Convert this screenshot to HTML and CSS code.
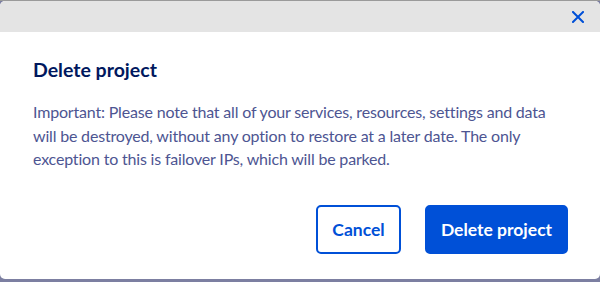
FILE: index.html
```html
<!DOCTYPE html>
<html lang="en">
<head>
<meta charset="utf-8">
<title>Delete project</title>
<link rel="stylesheet" href="styles.css">
</head>
<body>
<div class="backdrop">
  <div class="modal" role="dialog" aria-labelledby="modal-title">
    <div class="modal-header">
      <button class="close" aria-label="Close">
        <svg width="12" height="12" viewBox="0 0 12 12" aria-hidden="true">
          <path d="M1 1 L11 11 M11 1 L1 11" stroke="#0050d7" stroke-width="2" stroke-linecap="square" fill="none"/>
        </svg>
      </button>
    </div>
    <div class="modal-body">
      <h2 id="modal-title" class="title">Delete project</h2>
      <p class="text">Important: Please note that all of your services, resources, settings and data will be destroyed, without any option to restore at a later date. The only exception to this is failover IPs, which will be parked.</p>
    </div>
    <div class="modal-footer">
      <button class="btn btn-secondary">Cancel</button>
      <button class="btn btn-primary">Delete project</button>
    </div>
  </div>
</div>
</body>
</html>
```
FILE: styles.css
```css
html, body {
  margin: 0;
  padding: 0;
  height: 100%;
}
body {
  background: linear-gradient(#9a9a9a 0, #9a9a9a 1px, #7c7fa1 1px);
  font-family: Lato, "Liberation Sans", sans-serif;
  overflow: hidden;
}
.backdrop {
  padding-top: 1px;
  height: 100%;
  box-sizing: border-box;
}
.modal {
  background: #fff;
  height: 278px;
  border-radius: 5px;
  overflow: hidden;
  display: flex;
  flex-direction: column;
}
.modal-header {
  height: 31px;
  background: #e4e4e4;
  display: flex;
  justify-content: flex-end;
  align-items: center;
  padding-right: 16px;
}
.close {
  border: 0;
  background: none;
  padding: 0;
  width: 12px;
  height: 12px;
  display: flex;
  cursor: pointer;
}
.modal-body {
  padding: 26px 33px 0;
}
.title {
  margin: 0;
  font-size: 19.5px;
  line-height: 24px;
  font-weight: 700;
  color: #00185e;
}
.text {
  margin: 18px 0 0;
  font-size: 16px;
  letter-spacing: -0.18px;
  line-height: 23.5px;
  color: #4d5592;
}
.modal-footer {
  display: flex;
  justify-content: flex-end;
  gap: 24px;
  padding: 0 32px;
  margin-top: 34px;
}
.btn {
  height: 49px;
  border-radius: 5px;
  font-family: inherit;
  font-size: 17.5px;
  font-weight: 700;
  cursor: pointer;
  box-sizing: border-box;
}
.btn-secondary {
  width: 85px;
  background: #fff;
  color: #0050d7;
  border: 2px solid #0050d7;
}
.btn-primary {
  width: 143px;
  background: #0050d7;
  color: #fff;
  border: 2px solid #0050d7;
}
```
